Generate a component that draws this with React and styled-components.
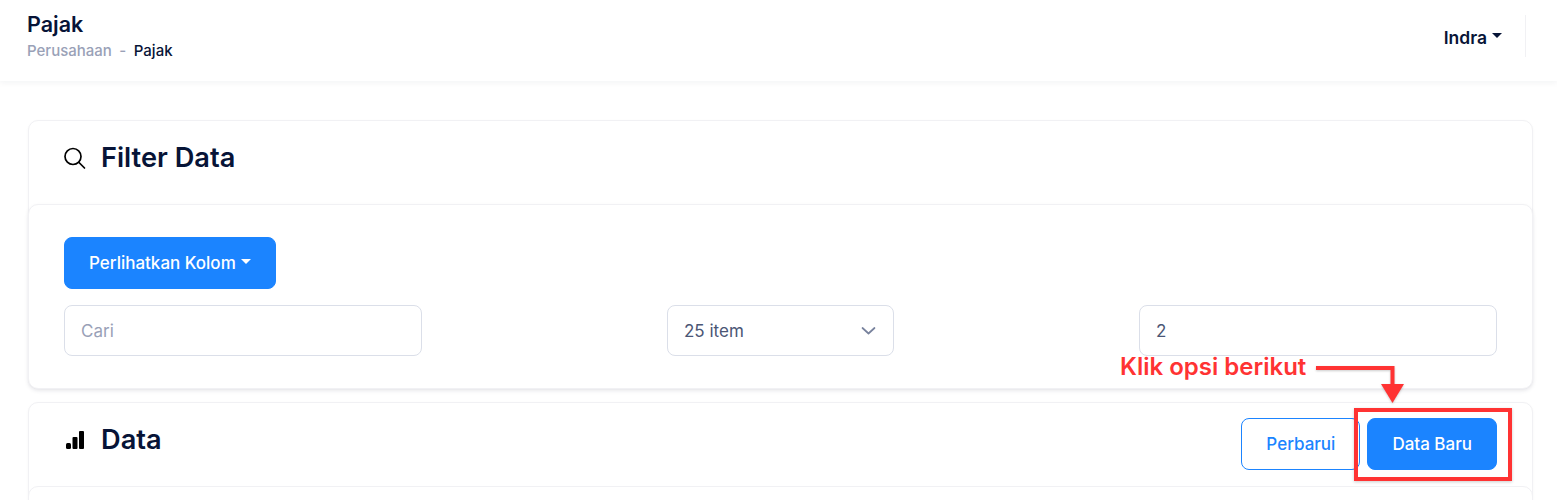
import React from 'react';
import styled, { createGlobalStyle } from 'styled-components';

const GlobalStyle = createGlobalStyle`
  html, body {
    margin: 0;
    padding: 0;
    background: #fff;
    height: 500px;
    overflow: hidden;
  }
  body {
    font-family: Inter, "Liberation Sans", sans-serif;
    color: #071437;
  }
`;

const Page = styled.div`
  position: relative;
  width: 1557px;
  height: 500px;
  overflow: hidden;
`;

const Header = styled.header`
  height: 81px;
  box-sizing: border-box;
  padding: 12px 31px 0 27px;
  display: flex;
  justify-content: space-between;
  align-items: flex-start;
  background: #fff;
  box-shadow: 0 2px 6px rgba(20, 30, 60, 0.05);
`;

const PageTitle = styled.h1`
  margin: 0;
  font-size: 21.5px;
  line-height: 24px;
  font-weight: 600;
  color: #071437;
`;

const Breadcrumb = styled.div`
  margin-top: 6px;
  display: flex;
  gap: 7.5px;
  font-size: 15px;
  line-height: 18px;
  font-weight: 500;
`;

const Crumb = styled.span`
  color: ${props => props.$active ? '#071437' : '#99a1b7'};
`;

const UserArea = styled.div`
  height: 42px;
  margin-top: 3px;
  padding-right: 23px;
  border-right: 1px solid #f1f1f4;
`;

const UserName = styled.div`
  display: flex;
  align-items: center;
  height: 44px;
  gap: 5px;
  font-size: 17.5px;
  font-weight: 600;
  color: #071437;
`;

const Caret = styled.span`
  display: inline-block;
  width: 0;
  height: 0;
  margin-top: -3px;
  border-left: 5px solid transparent;
  border-right: 5px solid transparent;
  border-top: 5px solid ${props => props.$color || '#071437'};
`;

const Content = styled.main`
  padding: 39px 24px 0 28px;
  display: flex;
  flex-direction: column;
  gap: 13px;
`;

const Card = styled.section`
  border: 1px solid #f1f1f4;
  border-radius: 10px;
  background: #fff;
  box-shadow: 0 1px 3px rgba(20, 30, 60, 0.04);
`;

const CardHead = styled.div`
  height: 83px;
  box-sizing: border-box;
  padding: ${props => props.$top}px 35px 0;
  display: flex;
  justify-content: space-between;
  align-items: flex-start;
`;

const CardTitle = styled.h2`
  margin: 0;
  display: flex;
  align-items: center;
  gap: 13px;
  font-size: 27.2px;
  line-height: 32px;
  font-weight: 600;
  color: #071437;
  padding-top: ${props => props.$top || 0}px;
`;

const InnerCard = styled.div`
  margin: 0 -1px -1px;
  border: 1px solid #f1f1f4;
  border-radius: 10px;
  background: #fff;
  box-shadow: 0 2px 4px rgba(20, 30, 60, 0.08);
  padding: 32px 35px;
  height: 185px;
  box-sizing: border-box;
`;

const EmptyBody = styled.div`
  margin: 0 -1px;
  border: 1px solid #f1f1f4;
  border-radius: 10px;
  height: 40px;
`;

const Button = styled.button`
  height: 52px;
  box-sizing: border-box;
  padding: 0 24px;
  border: 1px solid #1b84ff;
  border-radius: 8px;
  background: ${props => props.$outline ? '#fff' : '#1b84ff'};
  color: ${props => props.$outline ? '#1b84ff' : '#fff'};
  font-family: inherit;
  font-size: 17px;
  font-weight: 500;
  display: inline-flex;
  align-items: center;
  gap: 5px;
`;

const FilterRow = styled.div`
  margin-top: 16px;
  display: flex;
  justify-content: space-between;
`;

const Field = styled.div`
  width: ${props => props.$w}px;
  height: 51px;
  box-sizing: border-box;
  padding: 0 16px;
  border: 1px solid #dbdfe9;
  border-radius: 8px;
  display: flex;
  align-items: center;
  justify-content: space-between;
  font-size: 17px;
  font-weight: 400;
  color: ${props => props.$muted ? '#99a1b7' : '#4b5675'};
`;

const Actions = styled.div`
  display: flex;
  gap: 7px;
`;

const Callout = styled.div`
  position: absolute;
  left: 1120px;
  top: 352px;
  font-size: 24px;
  line-height: 30px;
  font-weight: 600;
  color: #ff3333;
  white-space: nowrap;
`;

const ArrowMark = styled.svg`
  position: absolute;
  left: 1310px;
  top: 360px;
  filter: drop-shadow(0 1px 1px rgba(0, 0, 0, 0.2));
`;

const Highlight = styled.div`
  position: absolute;
  left: 1354px;
  top: 408px;
  width: 158px;
  height: 73px;
  box-sizing: border-box;
  border: 4px solid #ff3333;
  box-shadow: 0 1px 3px rgba(0, 0, 0, 0.2);
`;

export default function App() {
  return (
    <Page>
      <GlobalStyle />
      <Header>
        <div>
          <PageTitle>Pajak</PageTitle>
          <Breadcrumb>
            <Crumb>Perusahaan</Crumb>
            <Crumb>-</Crumb>
            <Crumb $active>Pajak</Crumb>
          </Breadcrumb>
        </div>
        <UserArea>
          <UserName>Indra <Caret /></UserName>
        </UserArea>
      </Header>
      <Content>
        <Card>
          <CardHead $top={21}>
            <CardTitle>
              <svg width="24" height="24" viewBox="0 0 24 24" fill="none" stroke="#000" strokeWidth="1.7" strokeLinecap="round">
                <circle cx="9" cy="10.5" r="8" />
                <path d="M15 16.5l5.5 5.5" />
              </svg>
              Filter Data
            </CardTitle>
          </CardHead>
          <InnerCard>
            <Button>Perlihatkan Kolom <Caret $color="#fff" /></Button>
            <FilterRow>
              <Field $w={358} $muted>Cari</Field>
              <Field $w={227}>
                25 item
                <svg width="16" height="16" viewBox="0 0 16 16" fill="none" stroke="#78829d" strokeWidth="1.7" strokeLinecap="round" strokeLinejoin="round">
                  <path d="M1.5 5L7.5 10.5 13.5 5" />
                </svg>
              </Field>
              <Field $w={358}>2</Field>
            </FilterRow>
          </InnerCard>
        </Card>
        <Card>
          <CardHead $top={15}>
            <CardTitle $top={6}>
              <svg width="24" height="24" viewBox="0 0 24 24" fill="#000">
                <rect x="2" y="15" width="5" height="6" rx="1.5" />
                <rect x="8.5" y="9" width="5" height="12" rx="1" />
                <rect x="15" y="3" width="5" height="18" rx="1" />
              </svg>
              Data
            </CardTitle>
            <Actions>
              <Button $outline>Perbarui</Button>
              <Button>Data Baru</Button>
            </Actions>
          </CardHead>
          <EmptyBody />
        </Card>
      </Content>
      <Callout>Klik opsi berikut</Callout>
      <ArrowMark width="100" height="46" viewBox="0 0 100 46">
        <path d="M6 8H82.5V26" fill="none" stroke="#ff3333" strokeWidth="4" />
        <path d="M71 24H94L82.5 43Z" fill="#ff3333" />
      </ArrowMark>
      <Highlight />
    </Page>
  );
}
